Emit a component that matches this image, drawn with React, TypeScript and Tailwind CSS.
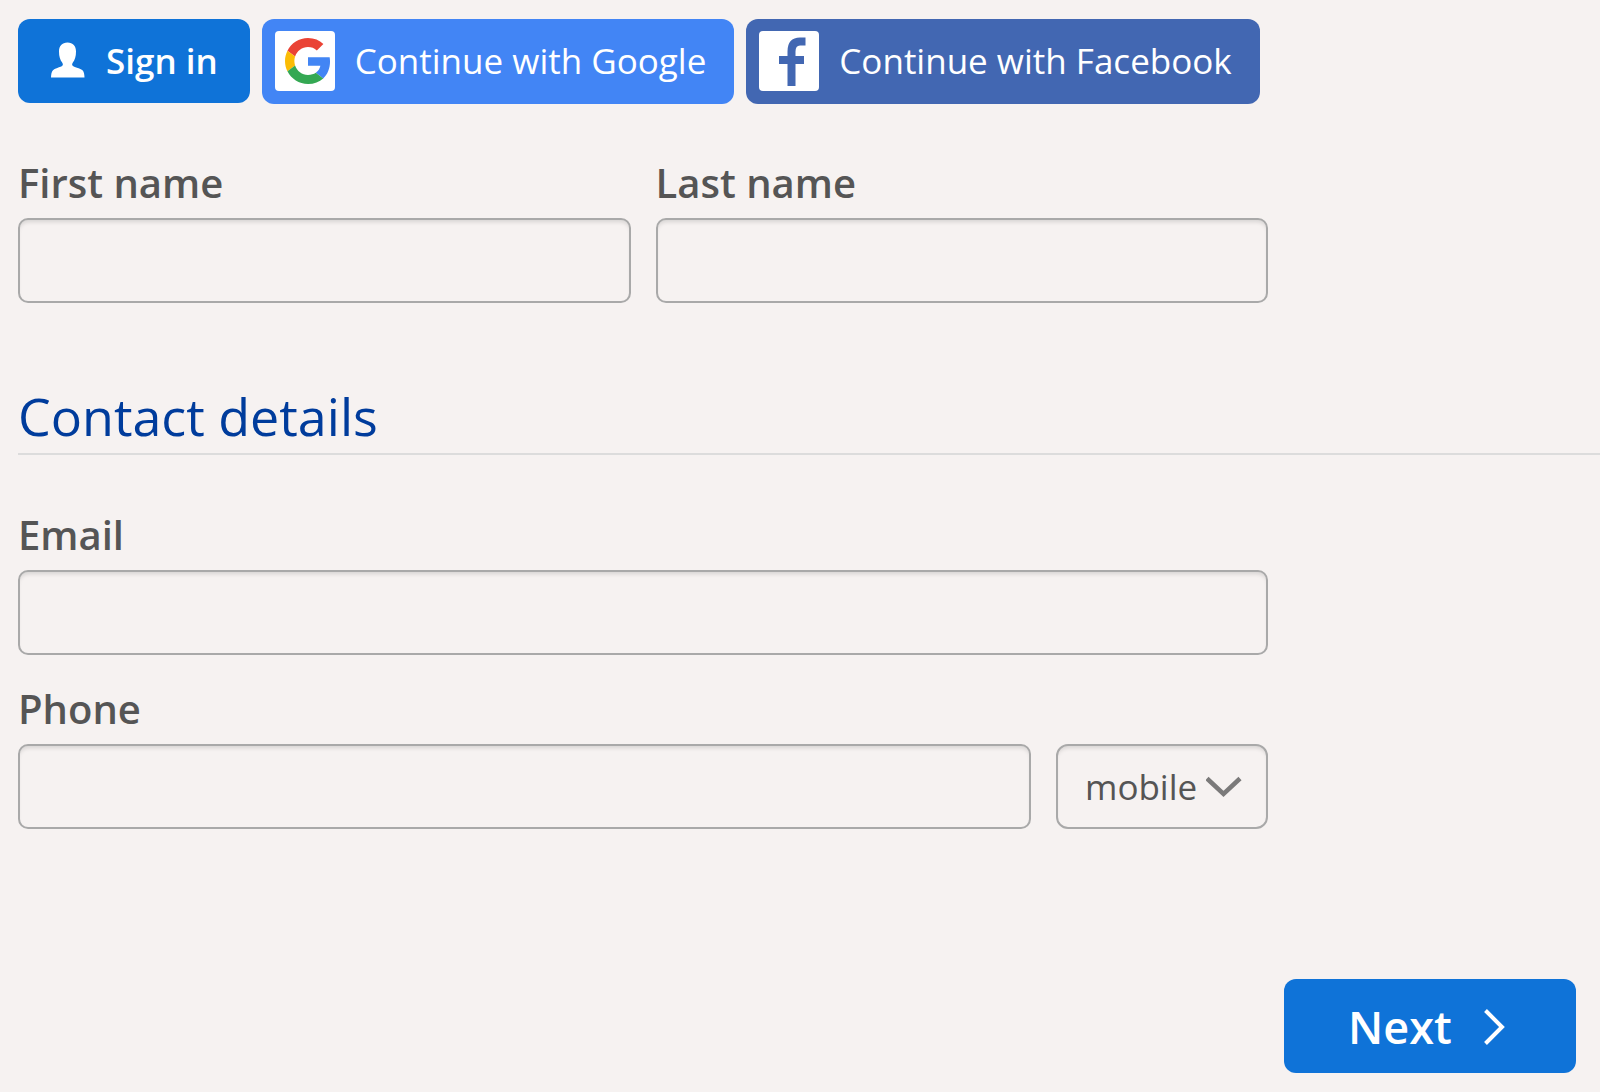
import type { ReactNode } from "react";

const inputClass =
  "h-[85px] w-full min-w-0 rounded-[10px] border-2 border-[#a9a9a9] bg-transparent px-7 text-[35px] text-[#555] shadow-[inset_0_4px_4px_-2px_rgba(0,0,0,0.13)] outline-none focus:border-[#0f73d8]";

function UserIcon() {
  return (
    <svg className="mb-0.5" width="34" height="36" viewBox="0 0 34 36" fill="currentColor" aria-hidden="true">
      <path d="M16.500 0.500C11 0.500 8 4 8 9.500c0 4.800 1 8.400 3.300 11.200 1.100 1.600 0.600 3-1 3.700C7.200 25.600 3.800 26.400 2 28.200 0.600 29.600 0 32.600 0 35.500h33.500c0-2.900-0.600-5.900-2-7.300-1.800-1.800-5.600-2.500-8.800-3.800-1.600-0.700-2.100-2.100-1-3.700 2.300-2.800 3.300-6.400 3.300-11.200 0-5.500-3-9-8.500-9z" />
    </svg>
  );
}

function GoogleLogo() {
  return (
    <svg className="ml-1.5" width="46" height="46" viewBox="0 0 48 48" aria-hidden="true">
      <path fill="#EA4335" d="M24 9.500c3.540 0 6.710 1.220 9.210 3.600l6.850-6.850C35.900 2.380 30.470 0 24 0 14.620 0 6.510 5.380 2.560 13.220l7.980 6.190C12.430 13.720 17.740 9.500 24 9.500z" />
      <path fill="#4285F4" d="M46.980 24.550c0-1.570-.15-3.090-.38-4.550H24v9.020h12.940c-.58 2.960-2.260 5.480-4.780 7.180l7.730 6c4.510-4.180 7.090-10.360 7.090-17.650z" />
      <path fill="#FBBC05" d="M10.530 28.590c-.48-1.450-.76-2.990-.76-4.590s.27-3.140.76-4.590l-7.980-6.190C.92 16.460 0 20.120 0 24c0 3.880.92 7.540 2.560 10.780l7.970-6.190z" />
      <path fill="#34A853" d="M24 48c6.480 0 11.930-2.130 15.890-5.810l-7.730-6c-2.150 1.450-4.920 2.300-8.160 2.300-6.260 0-11.570-4.220-13.470-9.910l-7.980 6.190C6.510 42.620 14.620 48 24 48z" />
    </svg>
  );
}

function FacebookLogo() {
  return (
    <svg width="60" height="60" viewBox="0 0 60 60" fill="none" stroke="#4267b2" aria-hidden="true">
      <path strokeWidth="8" d="M32.500 55V20.500Q32.500 10.500 41 10.500H46.500" />
      <path strokeWidth="8" d="M20 29H45" />
    </svg>
  );
}

function SocialButton({ className, logo, children }: { className: string; logo: ReactNode; children: ReactNode }) {
  return (
    <button type="button" className={`flex h-[85px] items-start gap-5 rounded-xl pt-3 pr-7 pl-[13px] text-[35px] leading-15 text-white ${className}`}>
      <span className="flex size-15 shrink-0 items-center justify-center rounded bg-white">{logo}</span>
      <span className="whitespace-nowrap">{children}</span>
    </button>
  );
}

function Label({ htmlFor, children }: { htmlFor: string; children: ReactNode }) {
  return (
    <label htmlFor={htmlFor} className="mb-[7px] block text-[40px] leading-14 font-semibold text-[#555]">
      {children}
    </label>
  );
}

export default function App() {
  return (
    <main className="min-h-screen bg-[#f6f2f1] pt-[19px] pb-[19px] pl-[18px] font-['Open_Sans',sans-serif]">
      <form onSubmit={(e) => e.preventDefault()}>
        <div className="flex flex-wrap items-start gap-3">
          <button type="button" className="flex h-[84px] items-center gap-[21px] rounded-xl bg-[#0f73d8] pr-8 pl-[33px] text-[35px] font-semibold text-white">
            <UserIcon />
            <span className="whitespace-nowrap">Sign in</span>
          </button>
          <SocialButton className="bg-[#4285f5]" logo={<GoogleLogo />}>
            Continue with Google
          </SocialButton>
          <SocialButton className="bg-[#4267b2]" logo={<FacebookLogo />}>
            Continue with Facebook
          </SocialButton>
        </div>

        <div className="mt-[51px] grid max-w-[1250px] grid-cols-2 gap-[25px]">
          <div>
            <Label htmlFor="first-name">First name</Label>
            <input id="first-name" type="text" className={inputClass} />
          </div>
          <div>
            <Label htmlFor="last-name">Last name</Label>
            <input id="last-name" type="text" className={inputClass} />
          </div>
        </div>

        <h2 className="mt-[81px] border-b-2 border-[#dcdcdc] pb-[5px] text-[52px] leading-16 text-[#003c9c]">
          Contact details
        </h2>

        <div className="mt-[52px] flex max-w-[1250px] flex-col gap-[26px]">
          <div>
            <Label htmlFor="email">Email</Label>
            <input id="email" type="email" className={inputClass} />
          </div>
          <div>
            <Label htmlFor="phone">Phone</Label>
            <div className="flex gap-[25px]">
              <input id="phone" type="tel" className={inputClass} />
              <div className="relative shrink-0">
                <select
                  aria-label="Phone type"
                  className="h-[85px] w-[212px] appearance-none rounded-xl border-2 border-[#a9a9a9] bg-transparent pt-0.5 pl-[27px] text-[35px] text-[#555] shadow-[inset_0_4px_4px_-2px_rgba(0,0,0,0.13)] outline-none"
                >
                  <option>mobile</option>
                  <option>home</option>
                  <option>work</option>
                </select>
                <svg className="pointer-events-none absolute top-8 right-[26px]" width="36" height="22" viewBox="0 0 36 22" fill="none" stroke="#7b7a7a" strokeWidth="4.500" aria-hidden="true">
                  <path d="M1 2.500L17.500 18L34 2.500" />
                </svg>
              </div>
            </div>
          </div>
        </div>

        <div className="mt-[150px] flex justify-end pr-6">
          <button type="submit" className="flex h-[94px] w-[292px] items-center gap-8 rounded-xl bg-[#0f73d8] px-16 pt-0.5 text-[45px] font-semibold text-white">
            Next
            <svg width="22" height="36" viewBox="0 0 22 36" fill="none" stroke="currentColor" strokeWidth="4" aria-hidden="true">
              <path d="M1.500 1.500L18 18L1.500 34.500" />
            </svg>
          </button>
        </div>
      </form>
    </main>
  );
}
